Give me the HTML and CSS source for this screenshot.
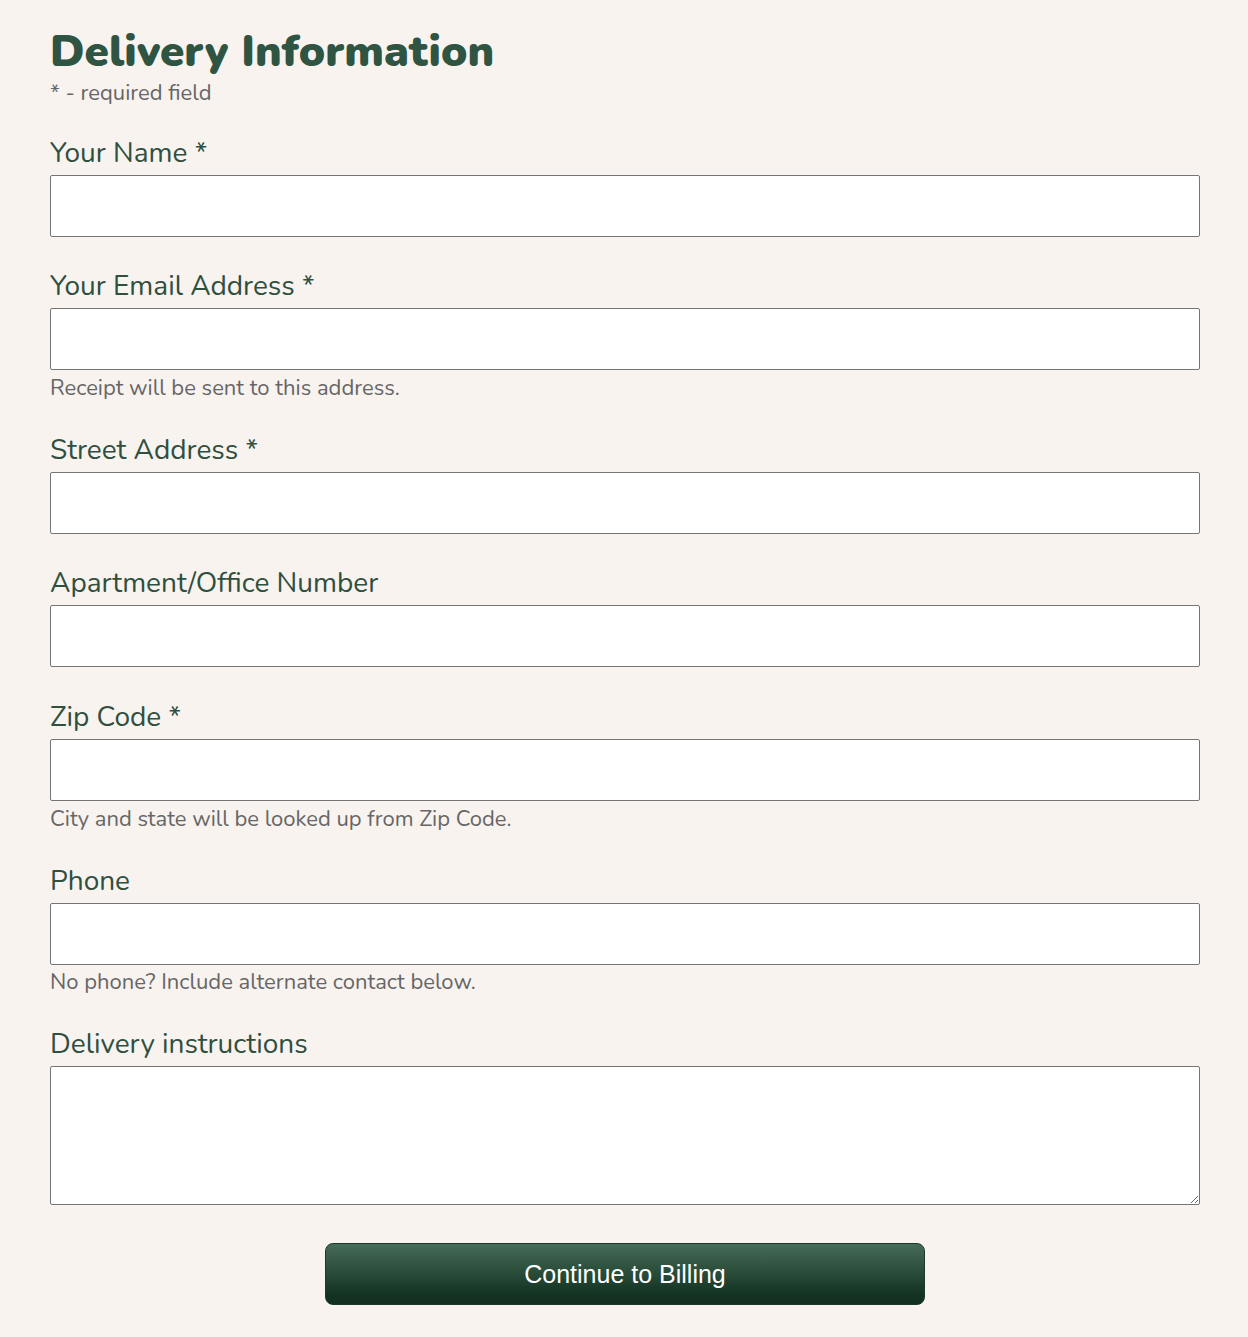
FILE: index.html
```html
<!DOCTYPE html>
<html lang="en">
<head>
<meta charset="utf-8">
<title>Delivery Information</title>
<link rel="stylesheet" href="styles.css">
</head>
<body>
<main class="page">
  <h1 class="title">Delivery Information</h1>
  <p class="required-note">* - required field</p>
  <form class="form">
    <div class="field">
      <label class="label" for="name">Your Name *</label>
      <input class="input" id="name" type="text">
    </div>
    <div class="field">
      <label class="label" for="email">Your Email Address *</label>
      <input class="input" id="email" type="email">
      <p class="hint">Receipt will be sent to this address.</p>
    </div>
    <div class="field">
      <label class="label" for="street">Street Address *</label>
      <input class="input" id="street" type="text">
    </div>
    <div class="field">
      <label class="label" for="apt">Apartment/Office Number</label>
      <input class="input" id="apt" type="text">
    </div>
    <div class="field">
      <label class="label" for="zip">Zip Code *</label>
      <input class="input" id="zip" type="text">
      <p class="hint">City and state will be looked up from Zip Code.</p>
    </div>
    <div class="field">
      <label class="label" for="phone">Phone</label>
      <input class="input" id="phone" type="tel">
      <p class="hint">No phone? Include alternate contact below.</p>
    </div>
    <div class="field">
      <label class="label" for="instructions">Delivery instructions</label>
      <textarea class="textarea" id="instructions"></textarea>
    </div>
    <div class="actions">
      <button class="button" type="button">Continue to Billing</button>
    </div>
  </form>
</main>
</body>
</html>
```
FILE: styles.css
```css
html, body {
  margin: 0;
  padding: 0;
  background: #f8f3ef;
}
body {
  font-family: "Nunito", "Lato", "Noto Sans", sans-serif;
  color: #2f4f3f;
}
.page {
  padding: 28px 48px 30px 50px;
}
.title {
  margin: 0;
  font-size: 44px;
  line-height: 48px;
  font-weight: 900;
  color: #2f5441;
}
.required-note {
  margin: 3px 0 0 0;
  font-size: 22px;
  line-height: 28px;
  color: #666666;
}
.form {
  display: flex;
  flex-direction: column;
  margin-top: 27px;
}
.field {
  display: flex;
  flex-direction: column;
  margin-bottom: 30px;
}
.field:nth-child(4) {
  margin-bottom: 31px;
}
.label {
  font-size: 28px;
  line-height: 38px;
  margin-bottom: 3px;
  color: #2f4f3f;
}
.input, .textarea {
  box-sizing: border-box;
  width: 100%;
  height: 62px;
  margin: 0;
  border: 1px solid #767676;
  border-radius: 2px;
  background: #ffffff;
  font: inherit;
}
.textarea {
  height: 139px;
  resize: vertical;
}
.hint {
  margin: 5px 0 0 0;
  font-size: 22px;
  line-height: 26px;
  color: #666666;
}
.field:nth-child(6) .hint {
  margin-top: 4px;
}
.actions {
  display: flex;
  justify-content: center;
  margin-top: 8px;
}
.button {
  width: 600px;
  height: 62px;
  border: 1px solid #1b3a2a;
  border-radius: 8px;
  background: linear-gradient(to bottom, #466b58 0%, #2b4e3b 45%, #133222 85%, #12301f 100%);
  color: #ffffff;
  font-family: "Liberation Sans", Arial, sans-serif;
  font-size: 25px;
  cursor: pointer;
}
```
